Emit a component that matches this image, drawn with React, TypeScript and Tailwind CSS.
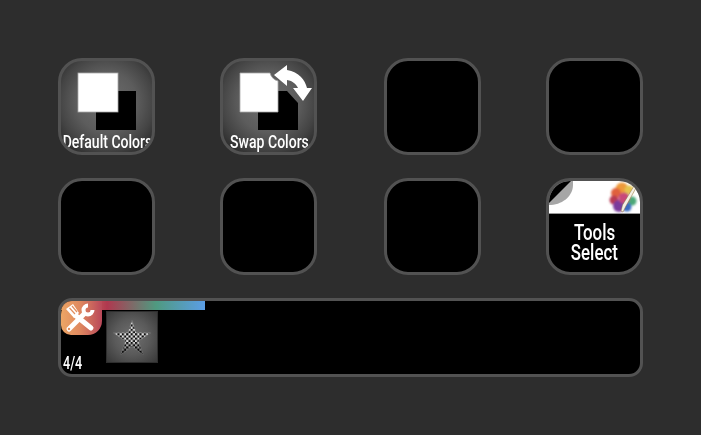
import React from 'react';

const labelFont = "font-['Roboto','Liberation_Sans',sans-serif] font-medium text-white";

const SwatchIcon = ({ swap = false }: { swap?: boolean }) => (
  <svg width="91" height="91" viewBox="0 0 91 91" className="absolute left-0 top-0">
    {swap ? (
      <>
        <path d="M35 30 H64 L75 42 V69 H35 Z" fill="#000" />
        <path d="M17 12 H47 C48 16 51 19 55 20 V51 H17 Z" fill="#fff" stroke="#aaa" strokeWidth="0.8" />
        <path d="M51 14 L64 4 L64 9 C76 11 82 19 84 27 L89 27 L80 40 L70 27 L75 27 C73 23 70 20 64 19 L64 25 Z" fill="#fff" />
      </>
    ) : (
      <>
        <rect x="35" y="30" width="40" height="39" fill="#000" />
        <rect x="17" y="12" width="40" height="39" fill="#fff" stroke="#aaa" strokeWidth="0.8" />
      </>
    )}
  </svg>
);

const ColorButton = ({ label, swap }: { label: string; swap?: boolean }) => (
  <div className="relative h-[97px] w-[97px] overflow-hidden rounded-[24px] border-[3px] border-[#525252] bg-[radial-gradient(circle_at_50%_45%,#6e6e6e_0%,#5c5c5c_45%,#444444_70%,#1e1e1e_100%)]">
    <SwatchIcon swap={swap} />
    <div className="absolute bottom-[-1px] left-[1px] right-0 flex justify-center">
      <span className={`${labelFont} origin-center scale-x-[0.78] whitespace-nowrap text-[18px] leading-[22px]`}>{label}</span>
    </div>
  </div>
);

const EmptyButton = () => (
  <div className="h-[97px] w-[97px] rounded-[24px] border-[3px] border-[#525252] bg-black" />
);

const ToolsSelect = () => (
  <div className="flex h-[97px] w-[97px] flex-col overflow-hidden rounded-[24px] border-[3px] border-[#525252] bg-black">
    <div className="relative h-[33px] w-full shrink-0 border-b border-[#9a9a9a] bg-white">
      <svg width="91" height="33" viewBox="0 0 91 33" className="absolute left-0 top-0">
        <path d="M0 0 H24 V4 C24 14 15 23 2 24 L0 24 Z" fill="#a6a6a6" />
        <path d="M0 22 L22 0 H0 Z" fill="#000" />
        <defs>
          <filter id="soft" x="-20%" y="-20%" width="140%" height="140%">
            <feGaussianBlur stdDeviation="1.1" />
          </filter>
        </defs>
        <g filter="url(#soft)">
          <circle cx="73" cy="8" r="6.5" fill="#ee9a3a" />
          <circle cx="67" cy="12" r="5" fill="#e0603c" />
          <circle cx="65" cy="19" r="4.5" fill="#b83a52" />
          <circle cx="70" cy="25" r="6" fill="#7a3a9c" />
          <circle cx="80" cy="9" r="4.5" fill="#e4c450" />
          <circle cx="83" cy="20" r="4.5" fill="#4ca878" />
          <circle cx="78" cy="26" r="4.5" fill="#3a6cc0" />
          <circle cx="75" cy="17" r="5.5" fill="#c8487a" />
        </g>
        <path d="M85 5 L87.5 6 L77 25 L74 31 L72 30 L73.5 24 Z" fill="#f4f0e4" stroke="#8a6a3a" strokeWidth="0.5" />
      </svg>
    </div>
    <div className={`${labelFont} mt-[8px] flex flex-col items-center text-[22.5px] leading-[20px]`}>
      <span className="scale-x-[0.75]">Tools</span>
      <span className="scale-x-[0.75]">Select</span>
    </div>
  </div>
);

const ToolsBadge = () => (
  <div className="h-[34px] w-[41px] shrink-0 rounded-bl-[10px] rounded-br-[14px] rounded-tl-[14px] bg-[linear-gradient(90deg,#eda665_0%,#e08a60_45%,#b9485a_100%)]">
    <svg width="41" height="34" viewBox="0 0 41 34" fill="none">
      <path d="M14 14 L30 27" stroke="#fff" strokeWidth="5" strokeLinecap="round" />
      <path d="M5 8 L12 3 L18 12 L13 17 Z" fill="#fff" />
      <path d="M8.5 7 L14 13 M11 5 L16 11" stroke="#e39060" strokeWidth="1.2" />
      <path d="M23 13 L8 28" stroke="#fff" strokeWidth="5" strokeLinecap="round" />
      <path d="M27 4.5 A4.5 4.5 0 1 0 31.5 9" stroke="#fff" strokeWidth="4" />
      <circle cx="8" cy="28" r="1.2" fill="#e39060" />
    </svg>
  </div>
);

const StarThumb = () => (
  <div className="flex h-[52px] w-[52px] items-center justify-center border border-[#2e2e2e] bg-[radial-gradient(circle,#707070_0%,#5a5a5a_50%,#383838_100%)]">
    <svg width="38" height="35" viewBox="0 0 38 35">
      <defs>
        <pattern id="check" width="4.4" height="4.4" patternUnits="userSpaceOnUse">
          <rect width="4.4" height="4.4" fill="#e4e4e4" />
          <rect width="2.2" height="2.2" fill="#101010" />
          <rect x="2.2" y="2.2" width="2.2" height="2.2" fill="#101010" />
        </pattern>
        <linearGradient id="fade" x1="0" y1="0" x2="0" y2="1">
          <stop offset="0.6" stopColor="#000" stopOpacity="0" />
          <stop offset="1" stopColor="#000" stopOpacity="0.65" />
        </linearGradient>
      </defs>
      <path id="star" d="M19 0.5 L23 12.5 L37.5 13 L25.5 21 L30 34.5 L19 26.5 L8 34.5 L12.5 21 L0.5 13 L15 12.5 Z" fill="url(#check)" stroke="#8a8a8a" strokeWidth="0.5" />
      <path d="M19 0.5 L23 12.5 L37.5 13 L25.5 21 L30 34.5 L19 26.5 L8 34.5 L12.5 21 L0.5 13 L15 12.5 Z" fill="url(#fade)" />
    </svg>
  </div>
);

const Strip = () => (
  <div className="col-span-4 h-[79px] w-[585px] overflow-hidden rounded-[14px] border-[3px] border-[#525252] bg-black">
    <div className="h-[9px] w-[144px] bg-[linear-gradient(90deg,#eda665_0%,#b0384f_32%,#4f9a80_66%,#5b9ee6_100%)]" />
    <div className="-mt-[9px] flex items-start">
      <ToolsBadge />
      <div className="ml-[4px] mt-[10px]">
        <StarThumb />
      </div>
    </div>
    <div className={`${labelFont} -mt-[10px] ml-[2px] w-[20px] origin-left scale-x-[0.7] whitespace-nowrap text-[18px] leading-[20px]`}>4/4</div>
  </div>
);

export default function App() {
  return (
    <div className="h-[435px] w-[701px] bg-[#2d2d2d] pl-[58px] pt-[58px]">
      <div className="grid grid-cols-[162px_164px_162px_97px] grid-rows-[120px_120px_79px]">
        <ColorButton label="Default Colors" />
        <ColorButton label="Swap Colors" swap />
        <EmptyButton />
        <EmptyButton />
        <EmptyButton />
        <EmptyButton />
        <EmptyButton />
        <ToolsSelect />
        <Strip />
      </div>
    </div>
  );
}
